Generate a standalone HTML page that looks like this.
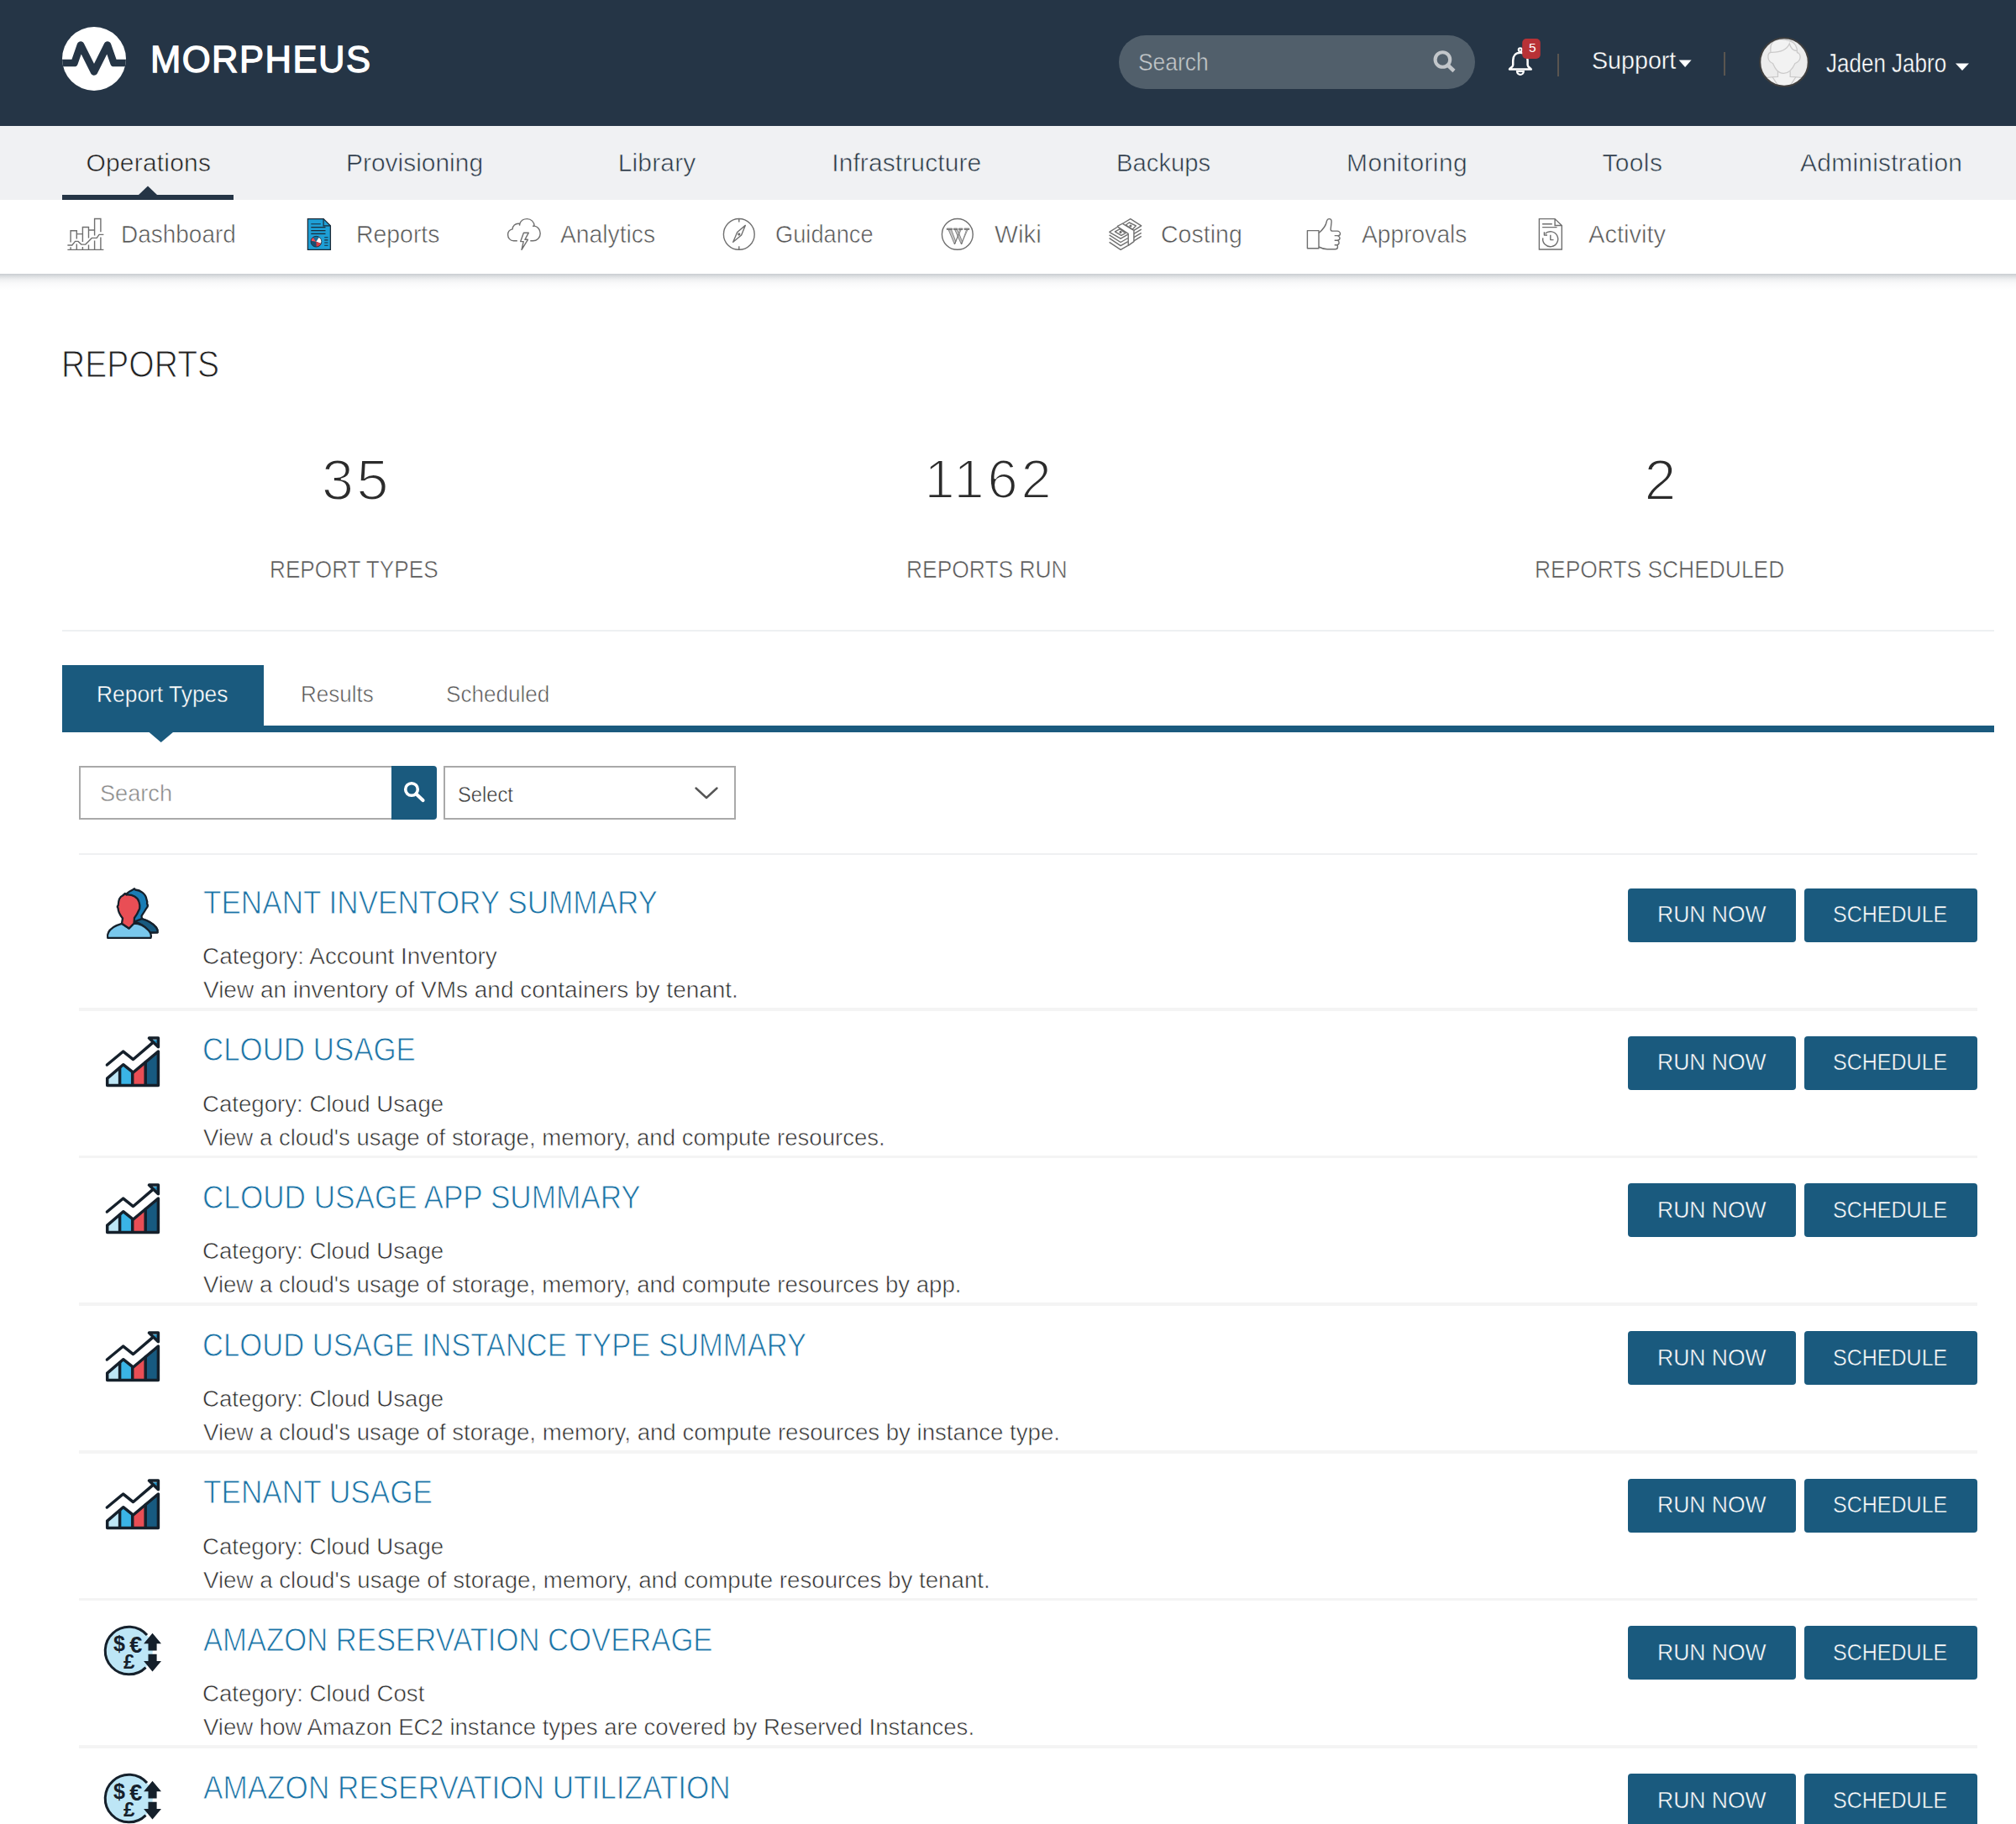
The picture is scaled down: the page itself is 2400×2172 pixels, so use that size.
<!DOCTYPE html>
<html><head><meta charset="utf-8"><title>Morpheus Reports</title>
<style>
html,body{margin:0;padding:0;background:#fff;width:2400px;height:2172px;overflow:hidden;position:relative;font-family:"Liberation Sans",sans-serif;}
.t{position:absolute;white-space:nowrap;line-height:1;transform-origin:0 0;}
.b{position:absolute;}
svg{position:absolute;overflow:visible;}
</style></head><body>
<div class="b" style="left:0;top:0;width:2400px;height:150px;background:#253546"></div>
<div class="b" style="left:0;top:150px;width:2400px;height:88px;background:#f0f1f3"></div>
<div class="b" style="left:0;top:238px;width:2400px;height:88px;background:#fff;z-index:1"></div>
<div class="b" style="left:0;top:326px;width:2400px;height:22px;background:linear-gradient(to bottom,rgba(45,60,75,0.26) 0px,rgba(45,60,75,0.17) 3px,rgba(45,60,75,0.07) 7px,rgba(45,60,75,0.025) 12px,rgba(45,60,75,0) 20px);z-index:1"></div>
<div class="b" style="left:74px;top:232px;width:204px;height:6px;background:#253546;z-index:2"></div>
<svg style="left:0;top:0;z-index:2" width="2400" height="240"><path d="M164.5 232.5 L176 221.5 L187.5 232.5 Z" fill="#253546"/></svg>
<div class="t" style="left:179.0px;top:49.7px;font-size:43.62px;letter-spacing:1.429px;color:#fff;font-weight:400;-webkit-text-stroke:1.3px #fff;">MORPHEUS</div>
<div class="b" style="left:1332px;top:42px;width:424px;height:64px;border-radius:32px;background:#515f6b"></div>
<div class="t" style="left:1355.3px;top:59.2px;font-size:29.50px;transform:scaleX(0.8956);color:#c5c9cc;font-weight:400;-webkit-text-stroke:0.5px #515f6b;">Search</div>
<div class="t" style="left:1895.0px;top:56.8px;font-size:29.95px;transform:scaleX(0.9567);color:#fff;font-weight:400;-webkit-text-stroke:0.4px #253546;">Support</div>
<div class="t" style="left:2174.0px;top:59.8px;font-size:30.54px;transform:scaleX(0.8518);color:#fff;font-weight:400;-webkit-text-stroke:0.4px #253546;">Jaden Jabro</div>
<div class="b" style="left:1854px;top:64px;width:2px;height:27px;background:#5a5550"></div>
<div class="b" style="left:2052px;top:62px;width:2px;height:28px;background:#5a5550"></div>
<div class="t" style="left:102.4px;top:179.0px;font-size:29.97px;letter-spacing:0.222px;color:#1f1f1f;font-weight:400;-webkit-text-stroke:0.6px #f0f1f3;">Operations</div>
<div class="t" style="left:412.0px;top:179.0px;font-size:29.97px;transform:scaleX(0.9987);color:#2a3846;font-weight:400;-webkit-text-stroke:0.6px #f0f1f3;">Provisioning</div>
<div class="t" style="left:735.7px;top:179.0px;font-size:29.97px;letter-spacing:0.167px;color:#2a3846;font-weight:400;-webkit-text-stroke:0.6px #f0f1f3;">Library</div>
<div class="t" style="left:990.2px;top:179.0px;font-size:29.97px;letter-spacing:0.115px;color:#2a3846;font-weight:400;-webkit-text-stroke:0.6px #f0f1f3;">Infrastructure</div>
<div class="t" style="left:1329.3px;top:179.0px;font-size:29.97px;transform:scaleX(0.9757);color:#2a3846;font-weight:400;-webkit-text-stroke:0.6px #f0f1f3;">Backups</div>
<div class="t" style="left:1603.1px;top:179.0px;font-size:29.97px;letter-spacing:0.400px;color:#2a3846;font-weight:400;-webkit-text-stroke:0.6px #f0f1f3;">Monitoring</div>
<div class="t" style="left:1907.5px;top:179.0px;font-size:29.97px;letter-spacing:0.350px;color:#2a3846;font-weight:400;-webkit-text-stroke:0.6px #f0f1f3;">Tools</div>
<div class="t" style="left:2143.1px;top:179.0px;font-size:29.97px;letter-spacing:0.231px;color:#2a3846;font-weight:400;-webkit-text-stroke:0.6px #f0f1f3;">Administration</div>
<div class="t" style="left:144.3px;top:264.0px;font-size:29.94px;transform:scaleX(0.9340);color:#555;font-weight:400;z-index:3;-webkit-text-stroke:0.6px #fff;">Dashboard</div>
<div class="t" style="left:423.5px;top:264.0px;font-size:29.94px;transform:scaleX(0.9485);color:#555;font-weight:400;z-index:3;-webkit-text-stroke:0.6px #fff;">Reports</div>
<div class="t" style="left:667.1px;top:264.0px;font-size:29.94px;transform:scaleX(0.9437);color:#555;font-weight:400;z-index:3;-webkit-text-stroke:0.6px #fff;">Analytics</div>
<div class="t" style="left:923.2px;top:264.0px;font-size:29.94px;transform:scaleX(0.9096);color:#555;font-weight:400;z-index:3;-webkit-text-stroke:0.6px #fff;">Guidance</div>
<div class="t" style="left:1184.4px;top:264.0px;font-size:29.94px;transform:scaleX(0.9873);color:#555;font-weight:400;z-index:3;-webkit-text-stroke:0.6px #fff;">Wiki</div>
<div class="t" style="left:1381.6px;top:264.0px;font-size:29.94px;transform:scaleX(0.9536);color:#555;font-weight:400;z-index:3;-webkit-text-stroke:0.6px #fff;">Costing</div>
<div class="t" style="left:1621.0px;top:264.0px;font-size:29.94px;transform:scaleX(0.9424);color:#555;font-weight:400;z-index:3;-webkit-text-stroke:0.6px #fff;">Approvals</div>
<div class="t" style="left:1890.7px;top:264.0px;font-size:29.94px;transform:scaleX(0.9713);color:#555;font-weight:400;z-index:3;-webkit-text-stroke:0.6px #fff;">Activity</div>
<div class="t" style="left:72.5px;top:411.2px;font-size:45.20px;transform:scaleX(0.8645);color:#222;font-weight:400;-webkit-text-stroke:1.1px #fff;">REPORTS</div>
<div class="t" style="left:383.0px;top:536.8px;font-size:68.35px;letter-spacing:3.600px;color:#2b2b2b;font-weight:400;-webkit-text-stroke:2px #fff;">35</div>
<div class="t" style="left:1100.4px;top:539.3px;font-size:64.94px;letter-spacing:3.867px;color:#2b2b2b;font-weight:400;-webkit-text-stroke:2px #fff;">1162</div>
<div class="t" style="left:1957.6px;top:537.4px;font-size:68.00px;color:#2b2b2b;font-weight:400;-webkit-text-stroke:2px #fff;">2</div>
<div class="t" style="left:321.4px;top:663.0px;font-size:29.94px;transform:scaleX(0.8738);color:#555;font-weight:400;-webkit-text-stroke:0.6px #fff;">REPORT TYPES</div>
<div class="t" style="left:1078.8px;top:663.0px;font-size:29.94px;transform:scaleX(0.8816);color:#555;font-weight:400;-webkit-text-stroke:0.6px #fff;">REPORTS RUN</div>
<div class="t" style="left:1827.2px;top:664.1px;font-size:29.13px;transform:scaleX(0.9062);color:#555;font-weight:400;-webkit-text-stroke:0.6px #fff;">REPORTS SCHEDULED</div>
<div class="b" style="left:74px;top:750px;width:2300px;height:2px;background:#eef0f2"></div>
<div class="b" style="left:74px;top:792px;width:240px;height:80px;background:#1a5a7e"></div>
<div class="b" style="left:74px;top:864px;width:2300px;height:8px;background:#1a5a7e"></div>
<svg style="left:0;top:0" width="400" height="900"><path d="M177 871.5 L191.7 884 L206.5 871.5 Z" fill="#1a5a7e"/></svg>
<div class="t" style="left:115.1px;top:811.9px;font-size:28.20px;transform:scaleX(0.9360);color:#fff;font-weight:400;-webkit-text-stroke:0.4px #1a5a7e;">Report Types</div>
<div class="t" style="left:358.2px;top:811.8px;font-size:28.49px;transform:scaleX(0.9130);color:#555;font-weight:400;-webkit-text-stroke:0.6px #fff;">Results</div>
<div class="t" style="left:531.2px;top:811.8px;font-size:28.49px;transform:scaleX(0.9160);color:#555;font-weight:400;-webkit-text-stroke:0.6px #fff;">Scheduled</div>
<div class="b" style="left:94px;top:912px;width:372px;height:64px;box-sizing:border-box;border:2px solid #a9a9a9;border-right:none;background:#fff"></div>
<div class="b" style="left:466px;top:912px;width:54px;height:64px;background:#1a5a7e;border-radius:0 4px 4px 0"></div>
<div class="t" style="left:118.8px;top:931.0px;font-size:28.05px;transform:scaleX(0.9682);color:#888;font-weight:400;-webkit-text-stroke:0.5px #fff;">Search</div>
<div class="b" style="left:528px;top:912px;width:348px;height:64px;box-sizing:border-box;border:2px solid #a9a9a9;background:#fff"></div>
<div class="t" style="left:544.8px;top:932.7px;font-size:26.60px;transform:scaleX(0.8918);color:#333;font-weight:400;-webkit-text-stroke:0.5px #fff;">Select</div>
<div class="b" style="left:94px;top:1016px;width:2260px;height:2px;background:#eff0f2"></div>
<div class="t" style="left:241.6px;top:1055.6px;font-size:38.51px;transform:scaleX(0.9119);color:#1a72a5;font-weight:400;-webkit-text-stroke:0.9px #fff;">TENANT INVENTORY SUMMARY</div>
<div class="t" style="left:241.0px;top:1123.9px;font-size:28.20px;transform:scaleX(0.9906);color:#2e2e2e;font-weight:400;-webkit-text-stroke:0.6px #fff;">Category: Account Inventory</div>
<div class="t" style="left:242.0px;top:1163.9px;font-size:28.20px;transform:scaleX(0.9922);color:#2e2e2e;font-weight:400;-webkit-text-stroke:0.6px #fff;">View an inventory of VMs and containers by tenant.</div>
<div class="b" style="left:94px;top:1200.0px;width:2260px;height:3.5px;background:#f4f4f4"></div>
<div class="b" style="left:1938px;top:1058.0px;width:200px;height:64px;background:#1a5a7e;border-radius:4px"></div>
<div class="b" style="left:2148px;top:1058.0px;width:206px;height:64px;background:#1a5a7e;border-radius:4px"></div>
<div class="t" style="left:1972.5px;top:1075.4px;font-size:27.77px;transform:scaleX(0.9549);color:#fff;font-weight:400;-webkit-text-stroke:0.5px #1a5a7e;">RUN NOW</div>
<div class="t" style="left:2182.2px;top:1075.4px;font-size:27.77px;transform:scaleX(0.9014);color:#fff;font-weight:400;-webkit-text-stroke:0.5px #1a5a7e;">SCHEDULE</div>
<svg style="left:0;top:0.00px" width="220" height="1200">
<g stroke="#15202b" stroke-width="2.3" stroke-linejoin="round">
<path d="M151 1064 C153 1062 156 1060.5 158 1059.5 L160 1058.3 L161 1059.5 C167 1060 173.5 1064 174.5 1071 C175.3 1073 175.5 1074.5 175 1076 C176.5 1078 176 1080 174 1082 C172 1085.5 170 1088.5 168.5 1090.8 L169 1094.2 C175 1096 182 1099.5 186 1104.5 C187.5 1106.5 187.8 1108.5 187.5 1110.3 L178 1110.5 C173 1102 163 1098 159 1098 Z" fill="#1a7db5"/>
<path d="M168.8 1094.2 C175 1096 182 1099.5 186 1104.5 C187.5 1106.5 187.8 1108.5 187.5 1110.3 L178 1110.5 C173 1103 167 1099 160 1097.5 Z" fill="#175a80"/>
<path d="M128.2 1116.8 L179.5 1116.8 C180.5 1114 179.5 1111 177 1108 C172 1102.5 165 1099.5 159.5 1099.5 L153.6 1105.5 L145 1099.8 C137 1102 131 1106 129 1110.5 C128 1112.5 127.8 1115 128.2 1116.8 Z" fill="#79c8ed"/>
<path d="M145 1099.8 L146 1093.5 C142.5 1089 140.5 1085 140.6 1081.5 C139.6 1080.5 139.8 1079 140.7 1078 C141 1072 143 1067.5 146 1066.5 L149 1064 L150.5 1065.5 C158 1065 164 1068.5 165.5 1074 C166.5 1077 166.7 1079.5 166.2 1082 C164.5 1086 162.5 1090 160 1093 L159.5 1099.5 L153.6 1105.5 Z" fill="#e94e55"/>
</g></svg>
<div class="t" style="left:240.7px;top:1231.3px;font-size:38.51px;transform:scaleX(0.9054);color:#1a72a5;font-weight:400;-webkit-text-stroke:0.9px #fff;">CLOUD USAGE</div>
<div class="t" style="left:241.0px;top:1299.6px;font-size:28.20px;transform:scaleX(0.9800);color:#2e2e2e;font-weight:400;-webkit-text-stroke:0.6px #fff;">Category: Cloud Usage</div>
<div class="t" style="left:242.0px;top:1339.6px;font-size:28.20px;transform:scaleX(0.9780);color:#2e2e2e;font-weight:400;-webkit-text-stroke:0.6px #fff;">View a cloud's usage of storage, memory, and compute resources.</div>
<div class="b" style="left:94px;top:1375.7px;width:2260px;height:3.5px;background:#f4f4f4"></div>
<div class="b" style="left:1938px;top:1233.7px;width:200px;height:64px;background:#1a5a7e;border-radius:4px"></div>
<div class="b" style="left:2148px;top:1233.7px;width:206px;height:64px;background:#1a5a7e;border-radius:4px"></div>
<div class="t" style="left:1972.5px;top:1251.1px;font-size:27.77px;transform:scaleX(0.9549);color:#fff;font-weight:400;-webkit-text-stroke:0.5px #1a5a7e;">RUN NOW</div>
<div class="t" style="left:2182.2px;top:1251.1px;font-size:27.77px;transform:scaleX(0.9014);color:#fff;font-weight:400;-webkit-text-stroke:0.5px #1a5a7e;">SCHEDULE</div>
<svg style="left:0;top:175.68px" width="220" height="1200"><g transform="translate(0 -175.68)">
<path d="M127.7 1283.8 L146.7 1267.4 L158.6 1276.7 L188.4 1251.7 V1292.1 H127.7 Z" fill="#175a80"/>
<path d="M127.7 1283.8 L142.6 1271 V1292.1 H127.7 Z" fill="#bde6f6"/>
<path d="M142.6 1271 L146.7 1267.4 L157.7 1276 V1292.1 H142.6 Z" fill="#3ab4e6"/>
<path d="M157.7 1276 L158.6 1276.7 L173.2 1264.4 V1292.1 H157.7 Z" fill="#e94e55"/>
<path d="M181.5 1238 L188.4 1238 L188.4 1244.5 Z" fill="#1a8fc4"/>
<g fill="none" stroke="#15202b" stroke-width="3.5" stroke-linejoin="round" stroke-linecap="round">
<path d="M127.7 1283.8 L146.7 1267.4 L158.6 1276.7 L188.4 1251.7 V1292.1 H127.7 Z"/>
<path d="M142.6 1271.5 V1292 M157.7 1276.5 V1292 M173.2 1264.7 V1292"/>
<path d="M127.4 1267.7 L146.7 1251.7 L158.6 1261.2 L181.5 1241.5"/>
<path d="M177.4 1235.8 H188.4 V1246.5 Z"/>
</g></g></svg>
<div class="t" style="left:240.7px;top:1407.0px;font-size:38.51px;transform:scaleX(0.9123);color:#1a72a5;font-weight:400;-webkit-text-stroke:0.9px #fff;">CLOUD USAGE APP SUMMARY</div>
<div class="t" style="left:241.0px;top:1475.3px;font-size:28.20px;transform:scaleX(0.9800);color:#2e2e2e;font-weight:400;-webkit-text-stroke:0.6px #fff;">Category: Cloud Usage</div>
<div class="t" style="left:242.0px;top:1515.3px;font-size:28.20px;transform:scaleX(0.9782);color:#2e2e2e;font-weight:400;-webkit-text-stroke:0.6px #fff;">View a cloud's usage of storage, memory, and compute resources by app.</div>
<div class="b" style="left:94px;top:1551.4px;width:2260px;height:3.5px;background:#f4f4f4"></div>
<div class="b" style="left:1938px;top:1409.4px;width:200px;height:64px;background:#1a5a7e;border-radius:4px"></div>
<div class="b" style="left:2148px;top:1409.4px;width:206px;height:64px;background:#1a5a7e;border-radius:4px"></div>
<div class="t" style="left:1972.5px;top:1426.8px;font-size:27.77px;transform:scaleX(0.9549);color:#fff;font-weight:400;-webkit-text-stroke:0.5px #1a5a7e;">RUN NOW</div>
<div class="t" style="left:2182.2px;top:1426.8px;font-size:27.77px;transform:scaleX(0.9014);color:#fff;font-weight:400;-webkit-text-stroke:0.5px #1a5a7e;">SCHEDULE</div>
<svg style="left:0;top:351.36px" width="220" height="1200"><g transform="translate(0 -175.68)">
<path d="M127.7 1283.8 L146.7 1267.4 L158.6 1276.7 L188.4 1251.7 V1292.1 H127.7 Z" fill="#175a80"/>
<path d="M127.7 1283.8 L142.6 1271 V1292.1 H127.7 Z" fill="#bde6f6"/>
<path d="M142.6 1271 L146.7 1267.4 L157.7 1276 V1292.1 H142.6 Z" fill="#3ab4e6"/>
<path d="M157.7 1276 L158.6 1276.7 L173.2 1264.4 V1292.1 H157.7 Z" fill="#e94e55"/>
<path d="M181.5 1238 L188.4 1238 L188.4 1244.5 Z" fill="#1a8fc4"/>
<g fill="none" stroke="#15202b" stroke-width="3.5" stroke-linejoin="round" stroke-linecap="round">
<path d="M127.7 1283.8 L146.7 1267.4 L158.6 1276.7 L188.4 1251.7 V1292.1 H127.7 Z"/>
<path d="M142.6 1271.5 V1292 M157.7 1276.5 V1292 M173.2 1264.7 V1292"/>
<path d="M127.4 1267.7 L146.7 1251.7 L158.6 1261.2 L181.5 1241.5"/>
<path d="M177.4 1235.8 H188.4 V1246.5 Z"/>
</g></g></svg>
<div class="t" style="left:240.7px;top:1582.7px;font-size:38.51px;transform:scaleX(0.8989);color:#1a72a5;font-weight:400;-webkit-text-stroke:0.9px #fff;">CLOUD USAGE INSTANCE TYPE SUMMARY</div>
<div class="t" style="left:241.0px;top:1650.9px;font-size:28.20px;transform:scaleX(0.9800);color:#2e2e2e;font-weight:400;-webkit-text-stroke:0.6px #fff;">Category: Cloud Usage</div>
<div class="t" style="left:242.0px;top:1690.9px;font-size:28.20px;transform:scaleX(0.9792);color:#2e2e2e;font-weight:400;-webkit-text-stroke:0.6px #fff;">View a cloud's usage of storage, memory, and compute resources by instance type.</div>
<div class="b" style="left:94px;top:1727.0px;width:2260px;height:3.5px;background:#f4f4f4"></div>
<div class="b" style="left:1938px;top:1585.0px;width:200px;height:64px;background:#1a5a7e;border-radius:4px"></div>
<div class="b" style="left:2148px;top:1585.0px;width:206px;height:64px;background:#1a5a7e;border-radius:4px"></div>
<div class="t" style="left:1972.5px;top:1602.5px;font-size:27.77px;transform:scaleX(0.9549);color:#fff;font-weight:400;-webkit-text-stroke:0.5px #1a5a7e;">RUN NOW</div>
<div class="t" style="left:2182.2px;top:1602.5px;font-size:27.77px;transform:scaleX(0.9014);color:#fff;font-weight:400;-webkit-text-stroke:0.5px #1a5a7e;">SCHEDULE</div>
<svg style="left:0;top:527.04px" width="220" height="1200"><g transform="translate(0 -175.68)">
<path d="M127.7 1283.8 L146.7 1267.4 L158.6 1276.7 L188.4 1251.7 V1292.1 H127.7 Z" fill="#175a80"/>
<path d="M127.7 1283.8 L142.6 1271 V1292.1 H127.7 Z" fill="#bde6f6"/>
<path d="M142.6 1271 L146.7 1267.4 L157.7 1276 V1292.1 H142.6 Z" fill="#3ab4e6"/>
<path d="M157.7 1276 L158.6 1276.7 L173.2 1264.4 V1292.1 H157.7 Z" fill="#e94e55"/>
<path d="M181.5 1238 L188.4 1238 L188.4 1244.5 Z" fill="#1a8fc4"/>
<g fill="none" stroke="#15202b" stroke-width="3.5" stroke-linejoin="round" stroke-linecap="round">
<path d="M127.7 1283.8 L146.7 1267.4 L158.6 1276.7 L188.4 1251.7 V1292.1 H127.7 Z"/>
<path d="M142.6 1271.5 V1292 M157.7 1276.5 V1292 M173.2 1264.7 V1292"/>
<path d="M127.4 1267.7 L146.7 1251.7 L158.6 1261.2 L181.5 1241.5"/>
<path d="M177.4 1235.8 H188.4 V1246.5 Z"/>
</g></g></svg>
<div class="t" style="left:241.6px;top:1758.4px;font-size:38.51px;transform:scaleX(0.9139);color:#1a72a5;font-weight:400;-webkit-text-stroke:0.9px #fff;">TENANT USAGE</div>
<div class="t" style="left:241.0px;top:1826.6px;font-size:28.20px;transform:scaleX(0.9800);color:#2e2e2e;font-weight:400;-webkit-text-stroke:0.6px #fff;">Category: Cloud Usage</div>
<div class="t" style="left:242.0px;top:1866.6px;font-size:28.20px;transform:scaleX(0.9820);color:#2e2e2e;font-weight:400;-webkit-text-stroke:0.6px #fff;">View a cloud's usage of storage, memory, and compute resources by tenant.</div>
<div class="b" style="left:94px;top:1902.7px;width:2260px;height:3.5px;background:#f4f4f4"></div>
<div class="b" style="left:1938px;top:1760.7px;width:200px;height:64px;background:#1a5a7e;border-radius:4px"></div>
<div class="b" style="left:2148px;top:1760.7px;width:206px;height:64px;background:#1a5a7e;border-radius:4px"></div>
<div class="t" style="left:1972.5px;top:1778.1px;font-size:27.77px;transform:scaleX(0.9549);color:#fff;font-weight:400;-webkit-text-stroke:0.5px #1a5a7e;">RUN NOW</div>
<div class="t" style="left:2182.2px;top:1778.1px;font-size:27.77px;transform:scaleX(0.9014);color:#fff;font-weight:400;-webkit-text-stroke:0.5px #1a5a7e;">SCHEDULE</div>
<svg style="left:0;top:702.72px" width="220" height="1200"><g transform="translate(0 -175.68)">
<path d="M127.7 1283.8 L146.7 1267.4 L158.6 1276.7 L188.4 1251.7 V1292.1 H127.7 Z" fill="#175a80"/>
<path d="M127.7 1283.8 L142.6 1271 V1292.1 H127.7 Z" fill="#bde6f6"/>
<path d="M142.6 1271 L146.7 1267.4 L157.7 1276 V1292.1 H142.6 Z" fill="#3ab4e6"/>
<path d="M157.7 1276 L158.6 1276.7 L173.2 1264.4 V1292.1 H157.7 Z" fill="#e94e55"/>
<path d="M181.5 1238 L188.4 1238 L188.4 1244.5 Z" fill="#1a8fc4"/>
<g fill="none" stroke="#15202b" stroke-width="3.5" stroke-linejoin="round" stroke-linecap="round">
<path d="M127.7 1283.8 L146.7 1267.4 L158.6 1276.7 L188.4 1251.7 V1292.1 H127.7 Z"/>
<path d="M142.6 1271.5 V1292 M157.7 1276.5 V1292 M173.2 1264.7 V1292"/>
<path d="M127.4 1267.7 L146.7 1251.7 L158.6 1261.2 L181.5 1241.5"/>
<path d="M177.4 1235.8 H188.4 V1246.5 Z"/>
</g></g></svg>
<div class="t" style="left:241.6px;top:1934.0px;font-size:38.51px;transform:scaleX(0.9000);color:#1a72a5;font-weight:400;-webkit-text-stroke:0.9px #fff;">AMAZON RESERVATION COVERAGE</div>
<div class="t" style="left:241.0px;top:2002.3px;font-size:28.20px;transform:scaleX(0.9809);color:#2e2e2e;font-weight:400;-webkit-text-stroke:0.6px #fff;">Category: Cloud Cost</div>
<div class="t" style="left:242.0px;top:2042.3px;font-size:28.20px;transform:scaleX(0.9771);color:#2e2e2e;font-weight:400;-webkit-text-stroke:0.6px #fff;">View how Amazon EC2 instance types are covered by Reserved Instances.</div>
<div class="b" style="left:94px;top:2078.4px;width:2260px;height:3.5px;background:#f4f4f4"></div>
<div class="b" style="left:1938px;top:1936.4px;width:200px;height:64px;background:#1a5a7e;border-radius:4px"></div>
<div class="b" style="left:2148px;top:1936.4px;width:206px;height:64px;background:#1a5a7e;border-radius:4px"></div>
<div class="t" style="left:1972.5px;top:1953.8px;font-size:27.77px;transform:scaleX(0.9549);color:#fff;font-weight:400;-webkit-text-stroke:0.5px #1a5a7e;">RUN NOW</div>
<div class="t" style="left:2182.2px;top:1953.8px;font-size:27.77px;transform:scaleX(0.9014);color:#fff;font-weight:400;-webkit-text-stroke:0.5px #1a5a7e;">SCHEDULE</div>
<svg style="left:0;top:878.40px" width="220" height="1200"><g transform="translate(0 -878.4)">
<circle cx="153.6" cy="1966" r="28.3" fill="#bde6f6"/>
<path d="M175 1947.5 A28.3 28.3 0 1 0 173.5 1986" fill="none" stroke="#15202b" stroke-width="3"/>
<path d="M181.5 1945.1 L192 1957.6 H186.6 V1966 H176.5 V1957.6 H171.1 Z M176.5 1970.1 H186.6 V1978.5 H192 L181.5 1991 L171.1 1978.5 H176.5 Z" fill="#15202b"/>
<g font-family="Liberation Sans" font-weight="bold" fill="#15202b" text-anchor="middle">
<text x="142" y="1966.5" font-size="25">$</text>
<text x="161.8" y="1968.6" font-size="27">€</text>
<text x="153.6" y="1987.4" font-size="24">£</text>
</g></g></svg>
<div class="t" style="left:241.6px;top:2109.7px;font-size:38.51px;transform:scaleX(0.9123);color:#1a72a5;font-weight:400;-webkit-text-stroke:0.9px #fff;">AMAZON RESERVATION UTILIZATION</div>
<div class="t" style="left:241.0px;top:2178.0px;font-size:28.20px;transform:scaleX(0.9809);color:#2e2e2e;font-weight:400;-webkit-text-stroke:0.6px #fff;">Category: Cloud Cost</div>
<div class="t" style="left:242.0px;top:2218.0px;font-size:28.20px;transform:scaleX(0.9771);color:#2e2e2e;font-weight:400;-webkit-text-stroke:0.6px #fff;">View how Amazon EC2 instance types are covered by Reserved Instances.</div>
<div class="b" style="left:94px;top:2254.1px;width:2260px;height:3.5px;background:#f4f4f4"></div>
<div class="b" style="left:1938px;top:2112.1px;width:200px;height:64px;background:#1a5a7e;border-radius:4px"></div>
<div class="b" style="left:2148px;top:2112.1px;width:206px;height:64px;background:#1a5a7e;border-radius:4px"></div>
<div class="t" style="left:1972.5px;top:2129.5px;font-size:27.77px;transform:scaleX(0.9549);color:#fff;font-weight:400;-webkit-text-stroke:0.5px #1a5a7e;">RUN NOW</div>
<div class="t" style="left:2182.2px;top:2129.5px;font-size:27.77px;transform:scaleX(0.9014);color:#fff;font-weight:400;-webkit-text-stroke:0.5px #1a5a7e;">SCHEDULE</div>
<svg style="left:0;top:1054.08px" width="220" height="1200"><g transform="translate(0 -878.4)">
<circle cx="153.6" cy="1966" r="28.3" fill="#bde6f6"/>
<path d="M175 1947.5 A28.3 28.3 0 1 0 173.5 1986" fill="none" stroke="#15202b" stroke-width="3"/>
<path d="M181.5 1945.1 L192 1957.6 H186.6 V1966 H176.5 V1957.6 H171.1 Z M176.5 1970.1 H186.6 V1978.5 H192 L181.5 1991 L171.1 1978.5 H176.5 Z" fill="#15202b"/>
<g font-family="Liberation Sans" font-weight="bold" fill="#15202b" text-anchor="middle">
<text x="142" y="1966.5" font-size="25">$</text>
<text x="161.8" y="1968.6" font-size="27">€</text>
<text x="153.6" y="1987.4" font-size="24">£</text>
</g></g></svg>
<svg style="left:0;top:0" width="200" height="150" viewBox="0 0 200 150">
<defs><clipPath id="lc"><circle cx="112" cy="70" r="38"/></clipPath></defs>
<circle cx="112" cy="70" r="38" fill="#fff"/>
<path clip-path="url(#lc)" d="M66 75 L88.5 75 L96 53.5 L112 85.5 L128 53.5 L135.5 75 L158 75" fill="none" stroke="#253546" stroke-width="8.5" stroke-linejoin="round" stroke-linecap="round"/>
</svg>
<svg style="left:0;top:0" width="1900" height="150">
<circle cx="1717.4" cy="71" r="8.8" fill="none" stroke="#c2c6ca" stroke-width="4.1"/>
<path d="M1723.5 77.5 L1731 84.5" stroke="#c2c6ca" stroke-width="4.6" stroke-linecap="butt"/>
</svg>
<svg style="left:0;top:0" width="1900" height="150">
<circle cx="1809.8" cy="59.3" r="2" fill="none" stroke="#fff" stroke-width="2.2"/>
<path d="M1809.8 62.8 C1804 62.8 1801.2 67 1801.2 72 L1801.2 77.5 C1801.2 79.5 1798 81 1797 82.5 L1822.8 82.5 C1821.5 81 1818.6 79.5 1818.6 77.5 L1818.6 72 C1818.6 67 1815.6 62.8 1809.8 62.8 Z" fill="none" stroke="#fff" stroke-width="2.5" stroke-linejoin="round"/>
<path d="M1806 85 A3.9 3.9 0 0 0 1813.8 85 Z" fill="none" stroke="#fff" stroke-width="2.2"/>
<rect x="1812.2" y="46" width="21.6" height="24" rx="5" fill="#b83236"/>
<text x="1824.3" y="61.8" font-family="Liberation Sans" font-size="15.5" fill="#fff" text-anchor="middle">5</text>
</svg>
<svg style="left:0;top:0" width="2200" height="150">
<defs><clipPath id="ac"><circle cx="2124" cy="74" r="28.8"/></clipPath></defs>
<circle cx="2124" cy="74" r="28.8" fill="#ececec"/>
<g clip-path="url(#ac)" fill="#f2f2f2" stroke="#cbcaca" stroke-width="1.3">
<path d="M2116.5 85 L2116.5 91.3 C2110 91.5 2104 92 2098 93.5 L2098 110 L2150 110 L2150 93.5 C2144 92 2138 91.5 2131.2 91.3 L2131.2 85"/>
<path d="M2110 91.5 L2118 104 M2138 91.5 L2130 104" fill="none"/>
<path d="M2108 62.3 C2105 63 2104.6 66 2105 69 C2105.5 72.5 2108 74.5 2110.5 75.5 C2113 81 2116 87.4 2123.4 87.4 C2131 87.4 2134.5 81 2137 75.5 C2139.5 74.5 2142.5 72.5 2143 69 C2143.4 66 2142 63 2139.5 62.5 C2140 57 2137 50 2130 48.5 C2124 46 2114 46 2110 50.5 C2107.5 53.5 2107.5 58 2108 62.3 Z"/>
<path d="M2108 62.3 C2117 62.5 2127 60 2130.3 52 C2132 58 2135 60.5 2139.5 60.5" fill="none"/>
</g>
<circle cx="2124" cy="74" r="28.8" fill="none" stroke="#3f3f3f" stroke-width="2.1"/>
</svg>
<svg style="left:0;top:0" width="2400" height="150">
<path d="M1998.6 71.5 L2013.6 71.5 L2006.1 80 Z" fill="#fff"/>
<path d="M2328 75.5 L2344 75.5 L2336 84 Z" fill="#fff"/>
</svg>
<svg style="left:0;top:0;z-index:3" width="2000" height="330"><g fill="none" stroke="#6f6f6f" stroke-width="1.4" stroke-linecap="butt" stroke-linejoin="miter"><path d="M80.4 297.4 H123.4"/><path d="M84.1 288.6 V274.8 H91.3 V284.4 M84.1 294.3 V297.4 M91.3 290.4 V297.4 M91.3 278.6 H98.4 M98.4 288 V270.5 H105.5 V283.5 M98.4 294.1 V297.4 M105.5 291.4 V297.4 M105.5 274 H112.6 M112.6 280.6 V260.5 H119.9 V276.3 M112.6 286.5 V297.4 M119.9 282.4 V297.4"/><path d="M80.4 292 H85.8 L89.5 287.4 H93 L96.8 291.1 H101.8 L109.3 283.4 H115.2 L118 279.4 H123.4"/><path d="M615.8 286.8 H611.4 C607.5 286.8 604.6 283.5 604.6 279.5 C604.6 276 607 273.5 610 272.9 C610.3 269 613.5 266.2 617 266.2 C617.6 266.2 618.2 266.3 618.7 266.5 C620 263 623.5 260.6 627.5 260.6 C632.5 260.6 636 264.5 636.1 269.1 C640 269.6 643.2 273.5 643.2 278 C643.2 282.8 639.5 286.8 634.5 286.8 H631.3"/><path d="M618.7 266.5 L618.5 268.6 M636.1 269.1 L634 269.2"/><path d="M623.4 277.2 H629.3 L624.9 285.3 H628.4 L621 297.3 L623.2 287.6 H619.7 Z" stroke-linejoin="round"/><circle cx="879.8" cy="278.9" r="18.4"/><path d="M879.8 260.5 V264.5 M879.8 293.3 V297.3"/><path d="M887.3 268.4 L877.7 276.5 L872.7 288.3 L882.6 280 Z" stroke-linejoin="round"/><circle cx="879.8" cy="278.9" r="0.9" fill="#6f6f6f"/><circle cx="1139.8" cy="278.9" r="18.4"/></g><g fill="#c4c4c4" stroke="#6f6f6f" stroke-width="0.8" stroke-linejoin="round"><path d="M1129 273.4 L1132.6 273.4 L1137.8 287.6 L1136.4 291 Z"/><path d="M1136.6 273.4 L1139.8 273.4 L1145.6 287.6 L1144.5 291 Z"/><path d="M1136.4 291 L1142.9 273.4 L1144.2 273.4 L1137.4 288.6 Z" fill="#fff"/><path d="M1144.5 291 L1150.7 273.4 L1152 273.4 L1145.4 288.6 Z" fill="#fff"/><path d="M1127.2 272 H1133.6 V273.5 H1127.2 Z M1135.3 272 H1139.8 V273.5 H1135.3 Z M1141.4 272 H1145.9 V273.5 H1141.4 Z M1148 272 H1153.8 V273.5 H1148 Z" fill="#999"/></g><g fill="none" stroke="#6f6f6f" stroke-width="1.4" stroke-linejoin="round"><path d="M1320.6 276.3 L1334.1 284.2 L1342.8 279.2 M1320.6 279.8 L1334.1 288.5 L1342.8 283.5 M1320.6 283.7 L1334.1 292.7 L1342.8 287.6 M1320.6 288.3 L1334.1 297.3 L1342.8 292.3"/><path d="M1320.6 276.3 L1329.9 270.5 M1329.9 269.6 L1337.6 265.5 L1345.8 260.6 L1358.7 268.8 L1349.9 274.3"/><path d="M1329.9 269.6 L1343.2 278.4 V292.3 L1349.9 287.7 V274.3 L1336.5 266.3"/><path d="M1349.9 278.4 L1358.7 273.2 M1349.9 282.6 L1358.7 277.3 M1349.9 286.8 L1358.7 281.4"/><path d="M1327.4 275.9 L1333.2 272.6 L1339.8 277.6 L1334.8 280.3 Z"/><path d="M1340.3 268 L1344.2 265 L1352.4 268.8 L1348 273.2 Z"/><circle cx="1334" cy="276.4" r="0.9" fill="#6f6f6f"/><circle cx="1345.9" cy="269" r="0.9" fill="#6f6f6f"/><rect x="1556.4" y="274.6" width="13.6" height="21.1"/><path d="M1570 277.5 C1574 274 1578 270.5 1579 265 C1579.5 262 1580.3 260.6 1582.4 260.6 C1584.5 260.6 1585.3 262.3 1585.1 264.5 L1584.2 272.5 C1584 274.2 1584.7 275.1 1586.4 275.1 H1592 C1594 275.1 1595.5 276.8 1595.5 278.3 C1595.5 279.8 1594.4 280.6 1593 280.8 C1594.3 281.4 1595 282.3 1595 283.6 C1595 285 1594 286 1592.6 286.3 C1593.6 286.8 1594.1 287.8 1594.1 289 C1594.1 290.5 1593 291.5 1591.7 291.8 C1592.3 292.3 1592.5 293 1592.5 294 C1592.5 295.7 1591.3 296.8 1589.4 296.8 H1580 C1576 296.8 1573 295.5 1570 294"/><path d="M1588.7 280.6 H1593 M1588.7 286.3 H1592.6 M1588.7 291.8 H1591.7"/><path d="M1832.4 260.6 H1851.1 L1859.3 268.5 V297 H1832.4 Z M1851.1 260.6 V268.5 H1859.3" stroke-linejoin="miter"/><path d="M1836.1 266.7 H1847.8 M1836.1 270.6 H1853.5"/><path d="M1836.8 283.3 A9 9 0 1 0 1839.5 278.2"/><path d="M1838.4 276.3 V280 H1842"/><path d="M1845.8 279.8 V285.6 H1849.5"/></g><path d="M366.4 260.6 H385.1 L393.4 268.8 V297.3 H366.4 Z" fill="#1e9fd6" stroke="#1b2a38" stroke-width="1.3"/><path d="M385.1 260.6 V268.8 H393.4" fill="none" stroke="#1b2a38" stroke-width="1.2"/><path d="M370.3 266.7 H381.8 M370.3 270.6 H387.5 M370.3 274.6 H387.5 M370.3 278.4 H387.5 M386.2 282.8 H390.5 M386.2 285.9 H390.5 M386.2 289 H390.5 M386.2 292.2 H390.5" stroke="#1b2a38" stroke-width="1.1"/><circle cx="376.4" cy="287.7" r="6.4" fill="#1a4d70"/><path d="M376.4 287.7 L370.09999999999997 286.7 A6.4 6.4 0 0 1 372.59999999999997 282.59999999999997 Z" fill="#f24d55"/><path d="M376.4 287.7 L372.59999999999997 282.59999999999997 A6.4 6.4 0 0 1 379.9 282.4 Z" fill="#1a6d9a"/><path d="M376.4 287.7 L379.9 282.4 A6.4 6.4 0 0 1 382.4 289.9 Z" fill="#fff"/><path d="M376.4 287.7 L382.4 289.9 A6.4 6.4 0 0 1 376.7 294.09999999999997 Z" fill="#d93c45"/><circle cx="376.4" cy="287.7" r="6.4" fill="none" stroke="#1b2a38" stroke-width="0.8"/></svg>
<svg style="left:0;top:0" width="900" height="1000">
<circle cx="490" cy="940" r="7.3" fill="none" stroke="#fff" stroke-width="3.6"/>
<path d="M495.5 945.5 L503.5 953" stroke="#fff" stroke-width="4.2" stroke-linecap="round"/>
<path d="M828.5 938.5 L841 950 L853.5 938.5" fill="none" stroke="#555" stroke-width="2.4" stroke-linecap="round" stroke-linejoin="round"/>
</svg>
</body></html>
